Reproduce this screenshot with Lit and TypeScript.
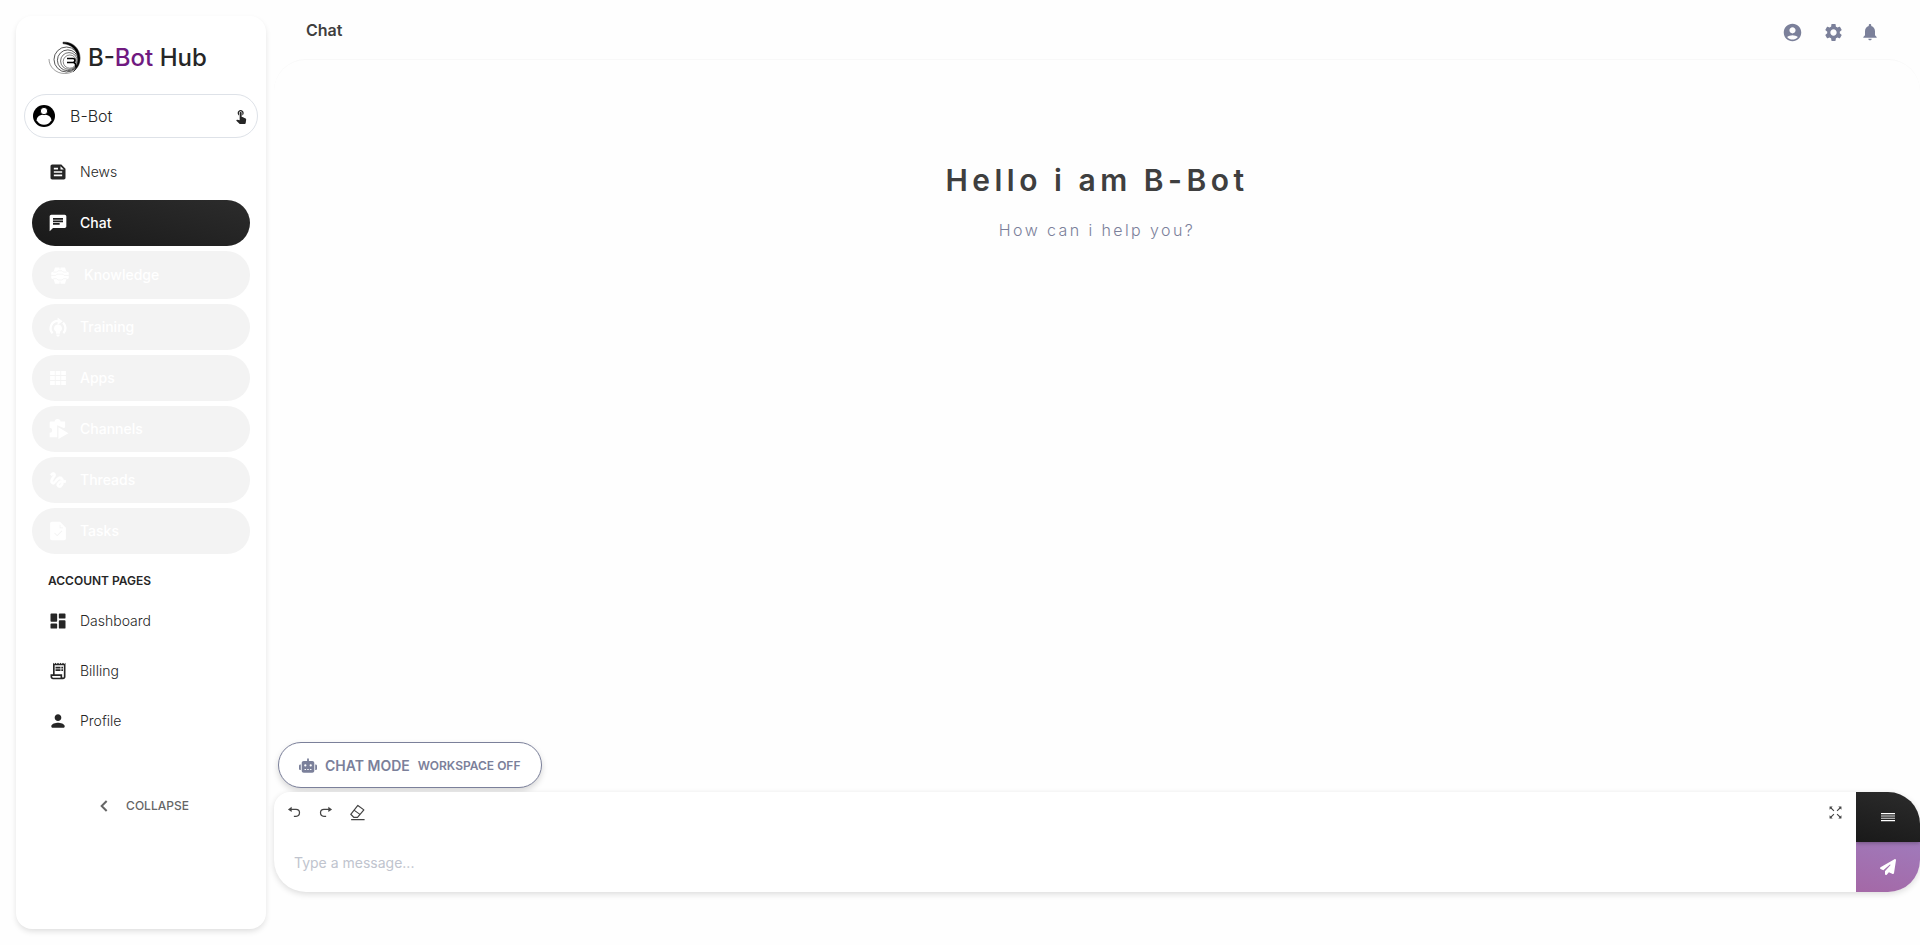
import { LitElement, html, css, svg } from "lit";
import { customElement, property, state } from "lit/decorators.js";
import { classMap } from "lit/directives/class-map.js";

const icons: Record<string, unknown> = {
  feed: svg`<path d="M16 3H5c-1.1 0-2 .9-2 2v14c0 1.1.9 2 2 2h14c1.1 0 2-.9 2-2V8l-5-5zM7 7h5v2H7V7zm10 10H7v-2h10v2zm0-4H7v-2h10v2zm-2-4V5l4 4h-4z"/>`,
  chat: svg`<path d="M20 2H4c-1.1 0-1.99.9-1.99 2L2 22l4-4h14c1.1 0 2-.9 2-2V4c0-1.1-.9-2-2-2zM6 9h12v2H6V9zm8 5H6v-2h8v2zm4-6H6V6h12v2z"/>`,
  brain: svg`<path d="M6 3h12l1.500 4.500 3 1.500v7l-3 1.500-1.500 5H6l-1.500-5-3-1.500V9l3-1.500z"/><path d="M4 8.500h4L9.500 7h5L16 8.500h4M1 12.500h6l1.500-1.500h7l1.500 1.500h6M4 16.500h4l1.500 1.500h5l1.500-1.500h4M12 2v3M12 20v3" fill="none" stroke="#f3f3f3" stroke-width="1"/>`,
  training: svg`<path d="M5.500 19.500A8.800 8.800 0 0 1 12 4.700M18.500 19.500A8.800 8.800 0 0 0 18 6.800" fill="none" stroke="currentColor" stroke-width="2.800"/><path d="M11.500.5 17.500 5l-6 4.500zM12 9a4.700 4.700 0 0 1 2.500 8.700V20h-5v-2.300A4.700 4.700 0 0 1 12 9zM10 21h4v1l-1 1.500h-2L10 22z"/>`,
  apps: svg`<path d="M2.500 3.500h5.700v5H2.500zM9.200 3.500h5.600v5H9.200zM15.800 3.500h5.700v5h-5.700zM2.500 9.500h5.700v5H2.500zM9.200 9.500h5.600v5H9.200zM15.800 9.500h5.700v5h-5.700zM2.500 15.500h5.700v5H2.500zM9.200 15.500h5.600v5H9.200zM15.800 15.500h5.700v5h-5.700z"/>`,
  channels: svg`<path d="M3 3h5a3.500 3 0 0 1 7 0h5.500v6.500l-1 1.500L11 7.500V22H2v-5.500a2.500 2.500 0 0 0 0-6V4z"/><path d="m12.500 10 12 7-12 7z"/>`,
  threads: svg`<path d="M4.590 6.890c.7-.71 1.400-1.350 1.710-1.220.5.2 0 1.030-.3 1.520-.25.42-2.860 3.890-2.860 6.310 0 1.280.48 2.340 1.340 2.980.75.56 1.740.73 2.640.46 1.070-.31 1.950-1.400 3.060-2.770 1.210-1.490 2.830-3.440 4.080-3.440 1.630 0 1.650 1.010 1.760 1.790-3.780.64-5.380 3.670-5.380 5.370 0 1.700 1.440 3.090 3.210 3.090 1.630 0 4.290-1.330 4.690-6.100H21v-2.500h-2.470c-.15-1.650-1.090-4.200-4.030-4.200-2.250 0-4.180 1.910-4.940 2.840-.58.73-2.060 2.480-2.290 2.720-.25.3-.68.84-1.110.84-.45 0-.72-.83-.36-1.920.35-1.090 1.400-2.860 1.850-3.520.78-1.140 1.300-1.920 1.300-3.280C8.950 3.690 7.310 3 6.440 3 5.120 3 3.970 4 3.720 4.250c-.36.36-.66.66-.88.93l1.750 1.710zm9.290 11.660c-.31 0-.74-.26-.74-.72 0-.6.73-2.200 2.870-2.760-.3 2.690-1.430 3.480-2.130 3.480z" stroke="currentColor"/>`,
  task: svg`<path fill-rule="evenodd" d="M5 1h9.500L21.500 8v13a2 2 0 0 1-2 2H4.500a2 2 0 0 1-2-2V3a2 2 0 0 1 2-2zM14 4.500v4.300h4v-.9h-3.100V4.500zM7.400 14.800l3.600 3.600 6.200-6.200-.8-.8-5.400 5.400-2.800-2.800z"/>`,
  dashboard: svg`<path d="M4 13h6a1 1 0 0 0 1-1V4a1 1 0 0 0-1-1H4a1 1 0 0 0-1 1v8a1 1 0 0 0 1 1zm0 8h6a1 1 0 0 0 1-1v-4a1 1 0 0 0-1-1H4a1 1 0 0 0-1 1v4a1 1 0 0 0 1 1zm10 0h6a1 1 0 0 0 1-1v-8a1 1 0 0 0-1-1h-6a1 1 0 0 0-1 1v8a1 1 0 0 0 1 1zM13 4v4a1 1 0 0 0 1 1h6a1 1 0 0 0 1-1V4a1 1 0 0 0-1-1h-6a1 1 0 0 0-1 1z"/>`,
  receipt: svg`<path d="M19.500 3.500 18 2l-1.500 1.500L15 2l-1.500 1.500L12 2l-1.500 1.500L9 2 7.500 3.500 6 2v14H3v3c0 1.660 1.340 3 3 3h12c1.660 0 3-1.340 3-3V2l-1.500 1.500zM15 20H6c-.55 0-1-.45-1-1v-1h10v2zm4-1c0 .55-.45 1-1 1s-1-.45-1-1v-3H8V5h11v14z"/><path d="M9 7h6v2H9zM16 7h2v2h-2zM9 10h6v2H9zM16 10h2v2h-2z"/>`,
  person: svg`<path d="M12 12c2.210 0 4-1.790 4-4s-1.790-4-4-4-4 1.790-4 4 1.790 4 4 4zm0 2c-2.670 0-8 1.340-8 4v1a1 1 0 0 0 1 1h14a1 1 0 0 0 1-1v-1c0-2.660-5.330-4-8-4z"/>`,
  account: svg`<path d="M12 2C6.480 2 2 6.480 2 12s4.480 10 10 10 10-4.480 10-10S17.520 2 12 2zm0 4c1.930 0 3.500 1.570 3.500 3.500S13.930 13 12 13s-3.500-1.570-3.500-3.500S10.070 6 12 6zm0 14c-2.030 0-4.430-.82-6.140-2.880C7.550 15.800 9.680 15 12 15s4.450.8 6.140 2.120C16.430 19.180 14.030 20 12 20z"/>`,
  settings: svg`<path d="M19.140 12.940c.04-.3.06-.61.06-.94 0-.32-.02-.64-.07-.94l2.030-1.580c.18-.14.23-.41.12-.61l-1.920-3.320c-.12-.22-.37-.29-.59-.22l-2.390.96c-.5-.38-1.030-.7-1.620-.94l-.36-2.540c-.04-.24-.24-.41-.48-.41h-3.840c-.24 0-.43.17-.47.41l-.36 2.540c-.59.24-1.130.57-1.620.94l-2.390-.96c-.22-.08-.47 0-.59.22L2.740 8.870c-.12.21-.08.47.12.61l2.030 1.580c-.05.3-.09.63-.09.94s.02.64.07.94l-2.030 1.580c-.18.14-.23.41-.12.61l1.920 3.320c.12.22.37.29.59.22l2.390-.96c.5.38 1.030.7 1.620.94l.36 2.540c.05.24.24.41.48.41h3.840c.24 0 .44-.17.47-.41l.36-2.540c.59-.24 1.130-.56 1.620-.94l2.390.96c.22.08.47 0 .59-.22l1.920-3.320c.12-.22.07-.47-.12-.61l-2.010-1.580zM12 15.600c-1.980 0-3.600-1.620-3.600-3.600s1.620-3.600 3.600-3.600 3.600 1.620 3.600 3.600-1.620 3.600-3.600 3.600z"/>`,
  bell: svg`<path d="M12 22c1.100 0 2-.9 2-2h-4c0 1.100.89 2 2 2zm6-6v-5c0-3.070-1.640-5.640-4.500-6.320V4c0-.83-.67-1.500-1.500-1.500s-1.500.67-1.500 1.500v.68C7.630 5.360 6 7.920 6 11v5l-2 2v1h16v-1l-2-2z"/>`,
  touch: svg`<path d="M9 11.240V7.500C9 6.120 10.120 5 11.500 5S14 6.120 14 7.500v3.740c1.210-.81 2-2.180 2-3.740C16 5.010 13.990 3 11.500 3S7 5.010 7 7.500c0 1.560.79 2.930 2 3.740zm9.840 4.630-4.540-2.260c-.17-.07-.35-.11-.54-.11H13v-6c0-.83-.67-1.500-1.500-1.500S10 6.670 10 7.500v10.740l-3.430-.72c-.08-.01-.15-.03-.24-.03-.31 0-.59.13-.79.33l-.79.8 4.940 4.940c.27.27.65.44 1.060.44h6.790c.75 0 1.330-.55 1.440-1.280l.75-5.270c.01-.07.02-.14.02-.2 0-.62-.38-1.160-.91-1.380z"/>`,
  avatar: svg`<circle cx="12" cy="12" r="12" fill="#000"/><path d="M4 16.500c0-4 3.600-6 8-6s8 2 8 6c-1.800 3.200-4.700 5-8 5s-6.200-1.800-8-5z" fill="#fff"/><circle cx="12" cy="6.600" r="4" fill="#fff" stroke="#000"/>`,
  undo: svg`<path d="M6 7h8.500a5.200 5.200 0 0 1 0 11H11" fill="none" stroke="currentColor" stroke-width="2"/><path d="M7.500 2.800v8.400L1.500 7z"/>`,
  redo: svg`<path d="M18 7H9.500a5.200 5.200 0 0 0 0 11H13" fill="none" stroke="currentColor" stroke-width="2"/><path d="M16.500 2.800v8.400l6-4.200z"/>`,
  eraser: svg`<path d="M2.500 14.500 12.500 2l8.500 6.300-9 10.700H7zM7.500 9l8.500 6M3 22.200h19" fill="none" stroke="currentColor" stroke-width="1.700" stroke-linejoin="round"/>`,
  expand: svg`<path d="M4 4l5.500 5.500M20 4l-5.500 5.500M4 20l5.500-5.500M20 20l-5.500-5.500" fill="none" stroke="currentColor" stroke-width="1.700"/><path d="M2.500 2.500h5l-5 5zM21.500 2.500h-5l5 5zM2.500 21.500h5l-5-5zM21.500 21.500h-5l5-5z"/>`,
  chevron: svg`<path d="M16 4.500 8.500 12l7.500 7.500" fill="none" stroke="currentColor" stroke-width="3"/>`,
  menu: svg`<path d="M1.500 6h21v1.800h-21zM1.500 16.600h21v1.800h-21z"/><path d="M1.500 9.600h21v1.800h-21zM1.500 13h21v1.800h-21z" opacity=".85"/>`,
};

const sprite = (name: string, size = 20) =>
  html`<svg class="icon" width=${size} height=${size} viewBox="0 0 24 24" fill="currentColor" aria-hidden="true">${icons[name]}</svg>`;

const shared = css`
  * { box-sizing: border-box; }
  .icon { display: block; flex: none; overflow: visible; }
  button { font: inherit; color: inherit; border: 0; background: none; padding: 0; cursor: pointer; }
  a { color: inherit; text-decoration: none; }
`;

@customElement("brand-logo")
class BrandLogo extends LitElement {
  static styles = css`
    :host { display: block; }
    .brand { display: flex; align-items: center; gap: 7px; font-size: 24px; line-height: 32px; font-weight: 500; color: #262626; text-decoration: none; }
    .accent { color: #701a80; }
    .mark { display: block; flex: none; }
  `;
  render() {
    return html`<a class="brand" href="#">
      <svg class="mark" width="33" height="34" viewBox="0 0 33 34" fill="none" stroke="#111" aria-hidden="true">
        <path d="M1 18c0 8 7 14.500 15.500 14.500 4 0 7-.9 10-3" stroke-width=".8" opacity=".5"/>
        <circle cx="18.500" cy="18.500" r="12.500" stroke-width=".7"/>
        <circle cx="19.800" cy="19.300" r="10.400" stroke-width=".7"/>
        <circle cx="21" cy="20" r="8.400" stroke-width=".6"/>
        <circle cx="21.800" cy="20.600" r="6.600" stroke-width=".5"/>
        <path d="M15 1.200C25 .5 32 8 32 17c0 6-2.500 10-6.500 13.500C29 26 30.500 22 30 17.500 29.200 8.500 23.500 3.500 15 2.600z" fill="#000" stroke-width=".6"/>
        <path d="M19 17.500h6c2.600 0 2.600 4 0 4h-6m6 0c2.500 0 3 2 3 5" stroke="#000" stroke-width="1.700"/>
      </svg>
      <span>B-<span class="accent">Bot</span> Hub</span>
    </a>`;
  }
}

@customElement("nav-item")
class NavItem extends LitElement {
  @property() label = "";
  @property() icon = "";
  @property({ type: Boolean }) active = false;
  @property({ type: Boolean }) locked = false;
  static styles = [
    shared,
    css`
      :host { display: block; }
      .item { display: flex; align-items: center; gap: 12px; width: 100%; min-height: 46px; padding: 0 16px; border-radius: 24px; font-size: 14px; line-height: 20px; font-weight: 300; color: #262626; }
      .active { background: linear-gradient(195deg, #2c2c2c, #191919); color: #fff; font-weight: 500; }
      .locked { background: #f3f3f3; color: #fff; font-weight: 500; cursor: default; }
      .roomy { min-height: 48px; gap: 14px; padding-left: 18px; }
    `,
  ];
  render() {
    const cls = classMap({ item: true, active: this.active, locked: this.locked, roomy: this.icon === "brain" });
    const body = html`${sprite(this.icon)}<span>${this.label}</span>`;
    return this.locked
      ? html`<button class=${cls} disabled>${body}</button>`
      : html`<a class=${cls} href="#${this.label.toLowerCase()}">${body}</a>`;
  }
}

@customElement("side-bar")
class SideBar extends LitElement {
  static styles = [
    shared,
    css`
      :host { display: flex; flex-direction: column; background: #fff; border-radius: 16px; box-shadow: 0 3px 6px -1px rgba(0, 0, 0, 0.14); padding: 25px 8px 24px; }
      .brand { padding: 0 24px; }
      .bot { display: flex; align-items: center; gap: 15px; width: 100%; height: 44px; margin-top: 19px; padding: 0 8px; border: 1px solid #dee2e8; border-radius: 22px; font-size: 16px; font-weight: 300; color: #262626; }
      .bot-name { flex: 1; text-align: left; }
      nav { display: flex; flex-direction: column; gap: 5px; padding: 0 8px; }
      .primary { margin-top: 11px; }
      .heading { margin: 17px 24px 7px; font-size: 12px; line-height: 20px; font-weight: 600; color: #262626; }
      .account { gap: 4px; }
      .collapse { display: flex; align-items: center; align-self: center; gap: 14px; margin-top: 52px; padding-left: 3px; font-size: 12px; line-height: 20px; font-weight: 500; color: #666; }
    `,
  ];
  render() {
    return html`
      <brand-logo class="brand"></brand-logo>
      <button class="bot">${sprite("avatar", 22)}<span class="bot-name">B-Bot</span>${sprite("touch", 16)}</button>
      <nav class="primary" aria-label="Main">
        <nav-item label="News" icon="feed"></nav-item>
        <nav-item label="Chat" icon="chat" active></nav-item>
        <nav-item label="Knowledge" icon="brain" locked></nav-item>
        <nav-item label="Training" icon="training" locked></nav-item>
        <nav-item label="Apps" icon="apps" locked></nav-item>
        <nav-item label="Channels" icon="channels" locked></nav-item>
        <nav-item label="Threads" icon="threads" locked></nav-item>
        <nav-item label="Tasks" icon="task" locked></nav-item>
      </nav>
      <h2 class="heading">ACCOUNT PAGES</h2>
      <nav class="account" aria-label="Account">
        <nav-item label="Dashboard" icon="dashboard"></nav-item>
        <nav-item label="Billing" icon="receipt"></nav-item>
        <nav-item label="Profile" icon="person"></nav-item>
      </nav>
      <button class="collapse">${sprite("chevron", 16)}<span>COLLAPSE</span></button>
    `;
  }
}

@customElement("message-composer")
class MessageComposer extends LitElement {
  @state() private text = "";
  static styles = [
    shared,
    css`
      :host { display: flex; min-height: 100px; background: #fff; border-radius: 16px 32px 32px 32px; box-shadow: 0 2px 6px rgba(0, 0, 0, 0.14); }
      .editor { flex: 1; display: flex; flex-direction: column; }
      .tools { display: flex; align-items: center; gap: 16px; height: 40px; padding: 0 13px; color: #444; }
      .tools .last { margin-left: auto; }
      .input { display: block; width: 100%; height: 60px; margin: 0; padding: 20px 20px 12px; resize: none; border: 0; outline: 0; background: none; font: inherit; font-size: 14px; line-height: 22px; color: #262626; overflow: hidden; }
      .input::placeholder { color: #c0c4ce; opacity: 1; }
      .actions { display: flex; flex-direction: column; width: 64px; border-radius: 0 32px 32px 0; overflow: hidden; color: #fff; }
      .action { flex: 1; display: grid; place-items: center; }
      .menu { background: linear-gradient(195deg, #2c2c2c, #191919); box-shadow: 0 1px 4px rgba(0, 0, 0, 0.3); z-index: 1; }
      .send { background: linear-gradient(195deg, #a07abb, #a468a6); }
    `,
  ];
  render() {
    return html`
      <div class="editor">
        <div class="tools">
          <button aria-label="Undo">${sprite("undo", 15)}</button>
          <button aria-label="Redo">${sprite("redo", 15)}</button>
          <button aria-label="Clear">${sprite("eraser", 17)}</button>
          <button class="last" aria-label="Expand">${sprite("expand", 15)}</button>
        </div>
        <textarea class="input" aria-label="Message" placeholder="Type a message..." .value=${this.text}
          @input=${(e: Event) => (this.text = (e.target as HTMLTextAreaElement).value)}></textarea>
      </div>
      <div class="actions">
        <button class="action menu" aria-label="Menu">${sprite("menu", 16)}</button>
        <button class="action send" aria-label="Send">
          <svg class="icon" width="16" height="16" viewBox="0 0 512 512" fill="currentColor" aria-hidden="true"><path d="M498.100 5.600c10.100 7 15.400 19.100 13.500 31.200l-64 416c-1.500 9.700-7.400 18.200-16 23s-18.900 5.400-28 1.600L284 427.700l-68.500 74.100c-8.900 9.700-22.900 12.900-35.200 8.100S160 493.200 160 480V396.400c0-4 1.500-7.800 4.200-10.700L331.800 202.800c5.800-6.300 5.600-16-.4-22s-15.700-6.400-22-.7L106 360.800 17.700 316.600C7.100 311.300 .3 300.700 0 288.900s5.900-22.800 16.100-28.700l448-256c10.700-6.100 23.900-5.500 34 1.400z"/></svg>
        </button>
      </div>
    `;
  }
}

@customElement("app-root")
class AppRoot extends LitElement {
  static styles = [
    shared,
    css`
      :host { display: flex; gap: 8px; min-height: 100vh; background: #fefefe; font-family: Inter, "Liberation Sans", sans-serif; color: #3f3f3f; box-sizing: border-box; padding: 16px 0 16px 16px; }
      .side { flex: none; width: 250px; }
      .main { flex: 1; min-width: 0; display: flex; flex-direction: column; }
      .top { display: flex; align-items: flex-start; justify-content: space-between; height: 32px; padding: 0 40px 0 32px; }
      .title { margin: 0; font-size: 16px; line-height: 28px; font-weight: 600; }
      .links { display: flex; align-items: center; gap: 16px; height: 32px; color: #7b809a; }
      .profile { margin-right: 4px; }
      .panel { flex: 1; display: flex; flex-direction: column; margin-top: 11px; border-top: 1px solid #f8f8f8; border-radius: 32px 32px 0 0; }
      .hello { flex: 1; padding-top: 96px; text-align: center; }
      .greeting { margin: 0; font-size: 30px; line-height: 48px; font-weight: 600; letter-spacing: 0.15em; }
      .sub { margin: 14px 0 0; font-size: 16px; line-height: 24px; font-weight: 300; letter-spacing: 0.15em; color: #7b809a; }
      .mode { display: flex; align-items: center; align-self: flex-start; gap: 8px; height: 46px; margin: 0 4px 4px; padding: 0 21px 0 20px; border: 1px solid #7b809a; border-radius: 23px; background: #fff; box-shadow: 0 3px 6px rgba(0, 0, 0, 0.16); color: #7b809a; font-size: 14px; font-weight: 600; }
      .state { font-size: 12px; }
      .composer { margin-bottom: 37px; }
    `,
  ];
  render() {
    return html`
      <side-bar class="side"></side-bar>
      <main class="main">
        <header class="top">
          <h1 class="title">Chat</h1>
          <div class="links">
            <button class="profile" aria-label="Account">${sprite("account", 21)}</button>
            <button aria-label="Settings">${sprite("settings", 21)}</button>
            <button aria-label="Notifications">${sprite("bell", 20)}</button>
          </div>
        </header>
        <section class="panel">
          <div class="hello">
            <h2 class="greeting">Hello i am B-Bot</h2>
            <p class="sub">How can i help you?</p>
          </div>
          <button class="mode">
            <svg class="icon" width="18" height="15" viewBox="0 0 640 512" fill="currentColor" aria-hidden="true"><path d="M320 0c17.700 0 32 14.300 32 32l0 64 120 0c39.800 0 72 32.200 72 72l0 272c0 39.800-32.200 72-72 72l-304 0c-39.800 0-72-32.200-72-72l0-272c0-39.800 32.200-72 72-72l120 0 0-64c0-17.700 14.300-32 32-32zM208 384c-8.800 0-16 7.200-16 16s7.200 16 16 16l32 0c8.800 0 16-7.200 16-16s-7.200-16-16-16l-32 0zm96 0c-8.800 0-16 7.200-16 16s7.200 16 16 16l32 0c8.800 0 16-7.200 16-16s-7.200-16-16-16l-32 0zm96 0c-8.800 0-16 7.200-16 16s7.200 16 16 16l32 0c8.800 0 16-7.200 16-16s-7.200-16-16-16l-32 0zM264 256a40 40 0 1 0-80 0 40 40 0 1 0 80 0zm152 40a40 40 0 1 0 0-80 40 40 0 1 0 0 80zM48 224l16 0 0 192-16 0c-26.500 0-48-21.500-48-48l0-96c0-26.500 21.500-48 48-48zm544 0c26.500 0 48 21.500 48 48l0 96c0 26.500-21.500 48-48 48l-16 0 0-192 16 0z"/></svg>
            <span>CHAT MODE</span><span class="state">WORKSPACE OFF</span>
          </button>
          <message-composer class="composer"></message-composer>
        </section>
      </main>
    `;
  }
}
